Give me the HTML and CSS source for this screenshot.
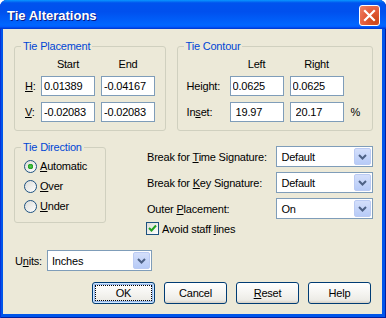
FILE: index.html
```html
<!DOCTYPE html>
<html lang="en">
<head>
    <meta charset="UTF-8">
    <title>Tie Alterations</title>
    <link rel="stylesheet" href="styles.css">
</head>
<body>
    <div class="window">
        <div class="titlebar">
            <span class="title">Tie Alterations</span>
            <button class="close" aria-label="Close">
                <svg width="13" height="13" viewBox="0 0 13 13"><path d="M2 2 L11 11 M11 2 L2 11" stroke="#fff" stroke-width="2.2" stroke-linecap="square"/></svg>
            </button>
        </div>
        <div class="client">
            <div class="top-row">
                <fieldset class="group placement">
                    <legend>Tie Placement</legend>
                    <div class="field-grid placement-grid">
                        <span></span><span class="col-head">Start</span><span class="col-head">End</span>
                        <label><u>H</u>:</label><input type="text" value="0.01389"><input type="text" value="-0.04167">
                        <label><u>V</u>:</label><input type="text" value="-0.02083"><input type="text" value="-0.02083">
                    </div>
                </fieldset>
                <fieldset class="group contour">
                    <legend>Tie Contour</legend>
                    <div class="field-grid contour-grid">
                        <span></span><span class="col-head">Left</span><span class="col-head">Right</span><span></span>
                        <label>Height:</label><input type="text" value="0.0625"><input type="text" value="0.0625"><span></span>
                        <label>In<u>s</u>et:</label><input type="text" class="wide-pad" value="19.97"><input type="text" class="wide-pad" value="20.17"><span class="unit">%</span>
                    </div>
                </fieldset>
            </div>

            <div class="mid-row">
                <fieldset class="group direction">
                    <legend>Tie Direction</legend>
                    <label class="radio-row"><input type="radio" name="dir" checked><span><u>A</u>utomatic</span></label>
                    <label class="radio-row"><input type="radio" name="dir"><span><u>O</u>ver</span></label>
                    <label class="radio-row"><input type="radio" name="dir"><span><u>U</u>nder</span></label>
                </fieldset>
                <div class="options">
                    <div class="option-row">
                        <span class="option-label">Break for <u>T</u>ime Signature:</span>
                        <div class="combo"><span class="combo-text">Default</span><span class="combo-btn"><svg width="9" height="6" viewBox="0 0 9 6"><path d="M1 1 L4.5 4.5 L8 1" fill="none" stroke="#4D6185" stroke-width="2"/></svg></span></div>
                    </div>
                    <div class="option-row">
                        <span class="option-label">Break for <u>K</u>ey Signature:</span>
                        <div class="combo"><span class="combo-text">Default</span><span class="combo-btn"><svg width="9" height="6" viewBox="0 0 9 6"><path d="M1 1 L4.5 4.5 L8 1" fill="none" stroke="#4D6185" stroke-width="2"/></svg></span></div>
                    </div>
                    <div class="option-row">
                        <span class="option-label">Outer <u>P</u>lacement:</span>
                        <div class="combo"><span class="combo-text">On</span><span class="combo-btn"><svg width="9" height="6" viewBox="0 0 9 6"><path d="M1 1 L4.5 4.5 L8 1" fill="none" stroke="#4D6185" stroke-width="2"/></svg></span></div>
                    </div>
                    <label class="check-row">
                        <span class="checkbox"><svg width="9" height="9" viewBox="0 0 9 9"><path d="M1 4 L3.5 6.5 L8 1.5" fill="none" stroke="#21A121" stroke-width="2"/></svg></span>
                        <span>Avoid staff <u>l</u>ines</span>
                    </label>
                </div>
            </div>

            <div class="units-row">
                <span class="units-label">U<u>n</u>its:</span>
                <div class="combo units-combo"><span class="combo-text">Inches</span><span class="combo-btn"><svg width="9" height="6" viewBox="0 0 9 6"><path d="M1 1 L4.5 4.5 L8 1" fill="none" stroke="#4D6185" stroke-width="2"/></svg></span></div>
            </div>

            <div class="buttons">
                <button class="btn default"><span class="focus">OK</span></button>
                <button class="btn">Cancel</button>
                <button class="btn"><u>R</u>eset</button>
                <button class="btn">Help</button>
            </div>
        </div>
    </div>
</body>
</html>
```

FILE: styles.css
```css
body {
    margin: 0;
    font-family: 'Liberation Sans', Arial, sans-serif;
    font-size: 11px;
    letter-spacing: -0.2px;
    color: #000;
    background: #fff;
}
.window {
    width: 386px;
    height: 318px;
    display: flex;
    flex-direction: column;
    background: #0055EA;
    border-radius: 7px 7px 0 0;
    box-shadow: inset 1px 0 #0831D9, inset -1px 0 #001EA0, inset 0 -1px #001EA0;
    box-sizing: border-box;
}
.titlebar {
    height: 29px;
    flex: none;
    display: flex;
    align-items: center;
    padding: 0 6px 0 7px;
    border-radius: 7px 7px 0 0;
    background: linear-gradient(to bottom, #0997FF, #0053EE 10%, #0050EE 40%, #0066FF 86%, #005BFF 93%, #003DD7 97%, #003DD7);
}
.title {
    flex: 1;
    color: #fff;
    font-weight: bold;
    font-size: 13px;
    letter-spacing: 0;
    text-shadow: 1px 1px #0A1883;
    margin-top: 1px;
}
.close {
    width: 21px;
    height: 21px;
    padding: 0;
    margin-top: 1px;
    border: 1px solid #fff;
    border-radius: 3px;
    background: radial-gradient(circle at 80% 80%, #CC4616, #E35B3A 50%, #F08468);
    display: flex;
    align-items: center;
    justify-content: center;
}
.client {
    flex: 1;
    margin: 0 4px 4px 3px;
    padding: 11px 9px 0 11px;
    background: #ECE9D8;
}

/* group boxes */
.group {
    margin: 0;
    padding: 0;
    border: 1px solid #D0D0BF;
    border-radius: 3px;
    box-sizing: border-box;
}
.group legend {
    margin-left: 6px;
    padding: 0 2px;
    line-height: 13px;
    color: #0046D5;
}
.top-row {
    display: flex;
    gap: 11px;
}
.placement {
    width: 152px;
    height: 91px;
}
.contour {
    width: 197px;
    height: 91px;
}
.field-grid {
    display: grid;
    column-gap: 6px;
    row-gap: 6px;
    align-items: center;
    padding-top: 5px;
}
.placement-grid {
    grid-template-columns: 10px 54px 54px;
    padding-left: 10px;
}
.contour-grid {
    grid-template-columns: 37px 54px 54px auto;
    padding-left: 9px;
}
.field-grid label {
    white-space: nowrap;
}
.col-head {
    text-align: center;
    line-height: 13px;
    margin-bottom: -1px;
}
.field-grid input {
    width: 54px;
    height: 20px;
    box-sizing: border-box;
    border: 1px solid #7F9DB9;
    padding: 0 0 0 2px;
    font: inherit;
    letter-spacing: -0.2px;
    background: #fff;
}
.field-grid input.wide-pad {
    padding-left: 5px;
}
.unit {
    padding-left: 1px;
}

/* direction + options */
.mid-row {
    display: flex;
    margin-top: 10px;
}
.direction {
    width: 92px;
    height: 82px;
    padding-top: 2px;
}
.radio-row {
    display: flex;
    align-items: center;
    height: 20px;
    padding-left: 9px;
}
.radio-row input {
    appearance: none;
    width: 13px;
    height: 13px;
    margin: 0 3px 0 0;
    border: 1px solid #1C5180;
    border-radius: 50%;
    background: linear-gradient(135deg, #DCDCD7, #fff);
    box-sizing: border-box;
}
.radio-row input:checked {
    background: radial-gradient(circle, #55C855 0, #21A121 2.5px, transparent 3px), linear-gradient(135deg, #DCDCD7, #fff);
}
.options {
    margin-left: auto;
    width: 227px;
    padding-top: 5px;
}
.option-row {
    display: flex;
    align-items: center;
    margin-bottom: 5px;
}
.option-label {
    width: 130px;
    padding-left: 1px;
}
.combo {
    width: 97px;
    height: 21px;
    box-sizing: border-box;
    border: 1px solid #7F9DB9;
    background: #fff;
    display: flex;
    align-items: center;
    padding: 1px;
}
.combo-text {
    flex: 1;
    padding-left: 3px;
}
.combo-btn {
    width: 17px;
    height: 17px;
    box-sizing: border-box;
    border: 1px solid #BBCBF3;
    border-radius: 2px;
    background: linear-gradient(to bottom, #D4DFFB, #B7CBF7);
    display: flex;
    align-items: center;
    justify-content: center;
}
.check-row {
    display: flex;
    align-items: center;
    margin-top: -2px;
}
.checkbox {
    width: 13px;
    height: 13px;
    box-sizing: border-box;
    border: 1px solid #1C5180;
    background: linear-gradient(135deg, #DCDCD7, #fff);
    display: flex;
    align-items: center;
    justify-content: center;
    margin-right: 3px;
}

/* units + buttons */
.units-row {
    display: flex;
    align-items: center;
    margin-top: 15px;
}
.units-label {
    width: 33px;
    padding-left: 1px;
    box-sizing: border-box;
}
.units-combo {
    width: 105px;
}
.buttons {
    display: flex;
    justify-content: flex-end;
    gap: 9px;
    margin-top: 11px;
    padding-right: 2px;
}
.btn {
    width: 63px;
    height: 22px;
    padding: 0;
    border: 1px solid #003C74;
    border-radius: 3px;
    background: linear-gradient(to bottom, #fff, #F3F2EE 60%, #ECEBE6 86%, #D6D0C5);
    font: inherit;
    letter-spacing: -0.2px;
    color: #000;
    display: flex;
    align-items: center;
    justify-content: center;
}
.btn.default {
    box-shadow: inset 0 0 0 1px #CEE7FF, inset 0 0 0 2px #98B8EA;
}
.focus {
    border: 1px dotted #000;
    width: 55px;
    height: 14px;
    display: flex;
    align-items: center;
    justify-content: center;
}
```
